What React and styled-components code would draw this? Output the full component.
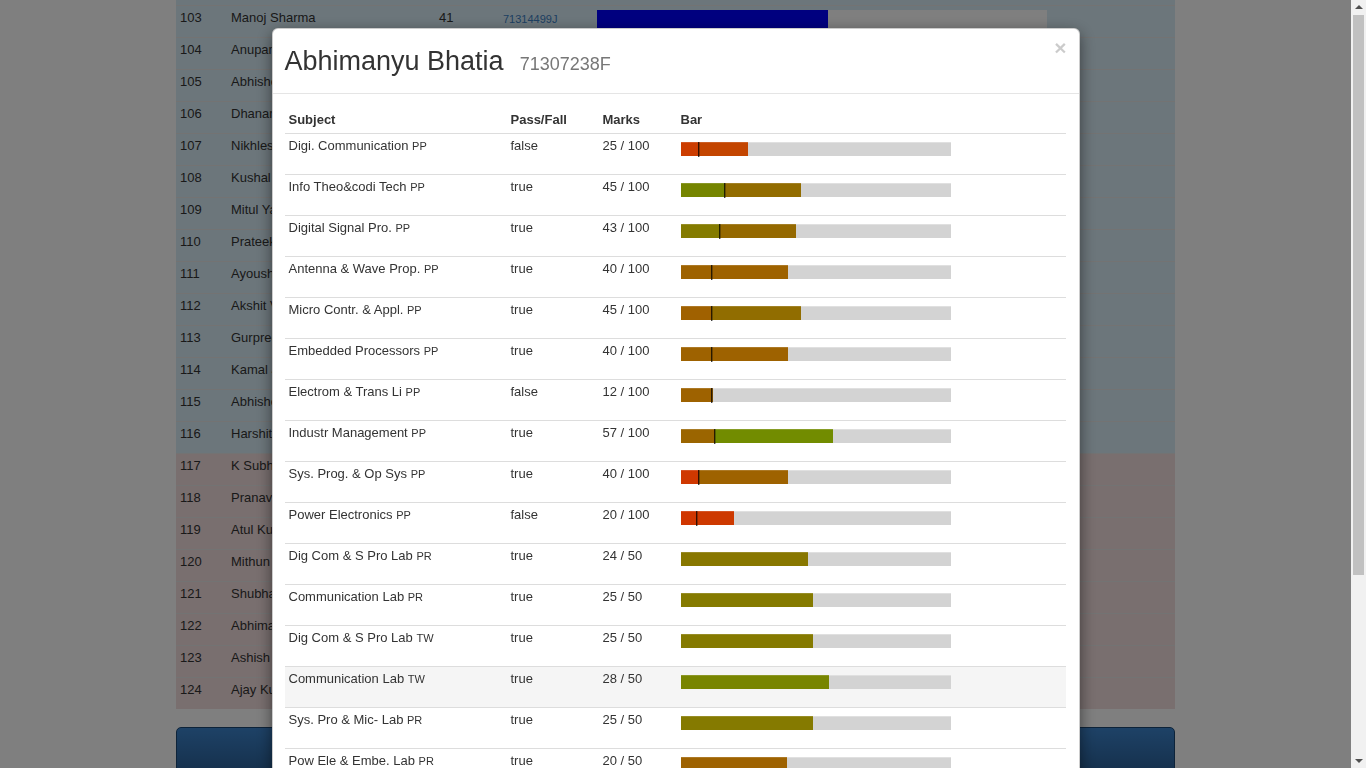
import React from 'react'
import styled, { createGlobalStyle } from 'styled-components'

const GlobalStyle = createGlobalStyle`
  html, body {
    margin: 0;
    padding: 0;
    height: 100%;
    overflow: hidden;
  }
  body {
    font-family: "Liberation Sans", Arial, Helvetica, sans-serif;
    font-size: 14px;
    color: #333;
    background: #fff;
  }
  * { box-sizing: border-box; }
`

const students = [
  [102, 'Rahul Gupta', '38', '71314487K', 208, 'info'],
  [103, 'Manoj Sharma', '41', '71314499J', 231, 'info'],
  [104, 'Anupam Kumar', '44', '71314502C', 247, 'info'],
  [105, 'Abhishek Singh', '39', '71314513H', 219, 'info'],
  [106, 'Dhananjay Rao', '47', '71314521F', 264, 'info'],
  [107, 'Nikhlesh Jain', '36', '71314538B', 202, 'info'],
  [108, 'Kushal Mehta', '42', '71314546D', 236, 'info'],
  [109, 'Mitul Yadav', '40', '71314554E', 225, 'info'],
  [110, 'Prateek Arora', '45', '71314562G', 253, 'info'],
  [111, 'Ayoush Khanna', '37', '71314570K', 208, 'info'],
  [112, 'Akshit Verma', '43', '71314589C', 242, 'info'],
  [113, 'Gurpreet Singh', '41', '71314597H', 231, 'info'],
  [114, 'Kamal Joshi', '38', '71307205B', 213, 'info'],
  [115, 'Abhishek Rana', '46', '71307213C', 258, 'info'],
  [116, 'Harshit Goel', '40', '71307221D', 225, 'info'],
  [117, 'K Subhash', '34', '71307229K', 191, 'danger'],
  [118, 'Pranav Sethi', '33', '71307230C', 185, 'danger'],
  [119, 'Atul Kumar', '35', '71307232G', 197, 'danger'],
  [120, 'Mithun Das', '32', '71307234B', 180, 'danger'],
  [121, 'Shubham Garg', '34', '71307236J', 191, 'danger'],
  [122, 'Abhimanyu Bhatia', '35', '71307238F', 197, 'danger'],
  [123, 'Ashish Kapoor', '31', '71307240H', 174, 'danger'],
  [124, 'Ajay Kumar', '33', '71307242C', 185, 'danger'],
]

const subjects = [
  { name: 'Digi. Communication', kind: 'PP', pass: 'false', marks: '25 / 100', fill: 67, split: 18, c1: '#cc3d00', c2: '#c34500' },
  { name: 'Info Theo&codi Tech', kind: 'PP', pass: 'true', marks: '45 / 100', fill: 120, split: 44, c1: '#758500', c2: '#926c00' },
  { name: 'Digital Signal Pro.', kind: 'PP', pass: 'true', marks: '43 / 100', fill: 115, split: 39, c1: '#847b00', c2: '#956900' },
  { name: 'Antenna & Wave Prop.', kind: 'PP', pass: 'true', marks: '40 / 100', fill: 107, split: 31, c1: '#9e6200', c2: '#9e6200' },
  { name: 'Micro Contr. & Appl.', kind: 'PP', pass: 'true', marks: '45 / 100', fill: 120, split: 31, c1: '#a06100', c2: '#916d00' },
  { name: 'Embedded Processors', kind: 'PP', pass: 'true', marks: '40 / 100', fill: 107, split: 31, c1: '#9e6200', c2: '#9e6200' },
  { name: 'Electrom & Trans Li', kind: 'PP', pass: 'false', marks: '12 / 100', fill: 32, split: 31, c1: '#9e6200', c2: '#9e6200' },
  { name: 'Industr Management', kind: 'PP', pass: 'true', marks: '57 / 100', fill: 152, split: 34, c1: '#9b6500', c2: '#728c00' },
  { name: 'Sys. Prog. & Op Sys', kind: 'PP', pass: 'true', marks: '40 / 100', fill: 107, split: 18, c1: '#cf3800', c2: '#9e6200' },
  { name: 'Power Electronics', kind: 'PP', pass: 'false', marks: '20 / 100', fill: 53, split: 16, c1: '#d03600', c2: '#cd3900' },
  { name: 'Dig Com & S Pro Lab', kind: 'PR', pass: 'true', marks: '24 / 50', fill: 127, c1: '#887700' },
  { name: 'Communication Lab', kind: 'PR', pass: 'true', marks: '25 / 50', fill: 132, c1: '#857a00' },
  { name: 'Dig Com & S Pro Lab', kind: 'TW', pass: 'true', marks: '25 / 50', fill: 132, c1: '#857a00' },
  { name: 'Communication Lab', kind: 'TW', pass: 'true', marks: '28 / 50', fill: 148, c1: '#788500', hover: true },
  { name: 'Sys. Pro & Mic- Lab', kind: 'PR', pass: 'true', marks: '25 / 50', fill: 132, c1: '#857a00' },
  { name: 'Pow Ele & Embe. Lab', kind: 'PR', pass: 'true', marks: '20 / 50', fill: 106, c1: '#9e6200' },
]

function MarksBar({ fill, split, c1, c2 }) {
  const first = split != null ? split : fill
  const rest = split != null ? Math.max(fill - split, 0) : 0
  return (
    <Track>
      <Segment style={{ width: first, background: c1 }} />
      {rest > 0 && <Segment style={{ width: rest, background: c2 }} />}
      {split != null && <Marker style={{ left: split - 1 }} />}
    </Track>
  )
}

export default function App() {
  return (
    <>
      <GlobalStyle />
      <Page>
        <Container>
          <StudentList>
            {students.map(([no, name, marks, roll, bar, tone]) => (
              <StudentRow key={no} $tone={tone}>
                <Cell>{no}</Cell>
                <Cell>{name}</Cell>
                <Cell>{marks}</Cell>
                <RollCell>{roll}</RollCell>
                <Cell>
                  <ScoreTrack>
                    <ScoreFill style={{ width: bar }} />
                  </ScoreTrack>
                </Cell>
              </StudentRow>
            ))}
          </StudentList>
          <LoadMore />
        </Container>
      </Page>

      <Backdrop />

      <ModalLayer>
        <ModalViewport>
          <Modal>
            <ModalHeader>
              <Title>
                Abhimanyu Bhatia<RollNo>71307238F</RollNo>
              </Title>
              <Close>×</Close>
            </ModalHeader>
            <ModalBody>
              <HeadRow>
                <HeadCell>Subject</HeadCell>
                <HeadCell>Pass/Fall</HeadCell>
                <HeadCell>Marks</HeadCell>
                <HeadCell>Bar</HeadCell>
              </HeadRow>
              {subjects.map((s, i) => (
                <SubjectRow key={i} $hover={s.hover}>
                  <TextCell>
                    {s.name} <Kind>{s.kind}</Kind>
                  </TextCell>
                  <TextCell>{s.pass}</TextCell>
                  <TextCell>{s.marks}</TextCell>
                  <BarCell>
                    <MarksBar fill={s.fill} split={s.split} c1={s.c1} c2={s.c2} />
                  </BarCell>
                </SubjectRow>
              ))}
            </ModalBody>
            <ModalFooter>
              <CloseButton>Close</CloseButton>
            </ModalFooter>
          </Modal>
        </ModalViewport>
        <Scrollbar>
          <Arrow $dir="up" />
          <ThumbTrack>
            <Thumb />
          </ThumbTrack>
          <Arrow $dir="down" />
        </Scrollbar>
      </ModalLayer>
    </>
  )
}

const Page = styled.div`
  height: 100vh;
  overflow: hidden;
  padding-right: 15px;
  background: #fff;
`

const Container = styled.div`
  width: 999px;
  margin: -27px auto 0;
`

const StudentList = styled.div`
  margin-bottom: 18px;
`

const StudentRow = styled.div`
  display: grid;
  grid-template-columns: 51px 208px 64px 94px 1fr;
  height: 32px;
  padding-left: 4px;
  border-top: 1px solid #e6e6e6;
  background: ${p => (p.$tone === 'danger' ? '#f2dede' : '#d9edf7')};
  color: #333;
`

const Cell = styled.div`
  padding-top: 2px;
  line-height: 20px;
  font-size: 13px;
`

const RollCell = styled(Cell)`
  padding-top: 6px;
  font-size: 11px;
  line-height: 14px;
  color: #3b7fc4;
`

const ScoreTrack = styled.div`
  width: 450px;
  height: 18px;
  margin-top: 2px;
  background: #fefefe;
`

const ScoreFill = styled.div`
  height: 100%;
  background: #0000ff;
`

const LoadMore = styled.div`
  height: 48px;
  border: 1px solid #1b4773;
  border-radius: 5px;
  background: linear-gradient(#3c84cd, #2a5f96);
`

const Backdrop = styled.div`
  position: fixed;
  inset: 0;
  background: rgba(0, 0, 0, 0.5);
`

const ModalLayer = styled.div`
  position: fixed;
  inset: 0;
  display: flex;
`

const ModalViewport = styled.div`
  flex: 1;
  overflow: hidden;
`

const Scrollbar = styled.div`
  display: flex;
  flex-direction: column;
  width: 15px;
  height: 100%;
  background: #f1f1f1;
`

const Arrow = styled.div`
  position: relative;
  height: 15px;
  flex-shrink: 0;
  &::after {
    content: '';
    position: absolute;
    left: 4px;
    top: ${p => (p.$dir === 'up' ? '5px' : '6px')};
    width: 0;
    height: 0;
    border-left: 4px solid transparent;
    border-right: 4px solid transparent;
    ${p =>
      p.$dir === 'up'
        ? 'border-bottom: 4px solid #505050;'
        : 'border-top: 4px solid #505050;'}
  }
`

const ThumbTrack = styled.div`
  flex: 1;
  min-height: 0;
`

const Thumb = styled.div`
  height: 560px;
  margin: 0 2px;
  background: #c1c1c1;
`

const Modal = styled.div`
  width: 808px;
  margin: 28px auto 30px;
  background: #fff;
  border: 1px solid rgba(0, 0, 0, 0.2);
  border-radius: 6px;
  box-shadow: 0 5px 15px rgba(0, 0, 0, 0.5);
`

const ModalHeader = styled.div`
  display: flex;
  align-items: flex-start;
  justify-content: space-between;
  padding: 15px 12px 15px 12px;
  border-bottom: 1px solid #e5e5e5;
`

const Title = styled.h4`
  margin: 0;
  height: 34px;
  font-size: 27px;
  font-weight: 400;
  line-height: 34px;
  color: #333;
`

const RollNo = styled.small`
  margin-left: 16px;
  font-size: 18px;
  line-height: 1;
  color: #777;
`

const Close = styled.span`
  margin-top: -7px;
  font-size: 21px;
  font-weight: 700;
  line-height: 1;
  color: #000;
  opacity: 0.2;
  cursor: pointer;
`

const ModalBody = styled.div`
  padding: 14px 13px 15px 12px;
`

const columns = `222px 92px 78px 1fr`

const HeadRow = styled.div`
  display: grid;
  grid-template-columns: ${columns};
  height: 26px;
  border-bottom: 1px solid #ddd;
`

const HeadCell = styled.div`
  padding: 3px 4px 0;
  font-size: 13px;
  font-weight: 700;
  line-height: 18px;
  color: #333;
`

const SubjectRow = styled.div`
  display: grid;
  grid-template-columns: ${columns};
  height: 41px;
  border-bottom: 1px solid #ddd;
  background: ${p => (p.$hover ? '#f5f5f5' : 'transparent')};
`

const TextCell = styled.div`
  padding: 3px 4px 0;
  font-size: 13px;
  line-height: 18px;
  color: #333;
`

const Kind = styled.span`
  font-size: 11px;
`

const BarCell = styled.div`
  padding: 8px 4px 0;
`

const Track = styled.div`
  position: relative;
  display: flex;
  width: 270px;
  height: 14px;
  background: #d3d3d3;
  box-shadow: inset 0 1px 0 rgba(255, 255, 255, 0.3);
`

const Segment = styled.div`
  height: 100%;
  box-shadow: inset 0 1px 0 rgba(255, 255, 255, 0.15);
`

const Marker = styled.div`
  position: absolute;
  top: 0;
  width: 2px;
  height: 15px;
  background: linear-gradient(90deg, rgba(0, 0, 0, 0.75) 50%, rgba(0, 0, 0, 0.3) 50%);
`

const ModalFooter = styled.div`
  display: flex;
  justify-content: flex-end;
  padding: 15px;
  border-top: 1px solid #e5e5e5;
`

const CloseButton = styled.button`
  padding: 6px 12px;
  font-family: inherit;
  font-size: 14px;
  line-height: 20px;
  color: #333;
  background: #fff;
  border: 1px solid #ccc;
  border-radius: 4px;
`
